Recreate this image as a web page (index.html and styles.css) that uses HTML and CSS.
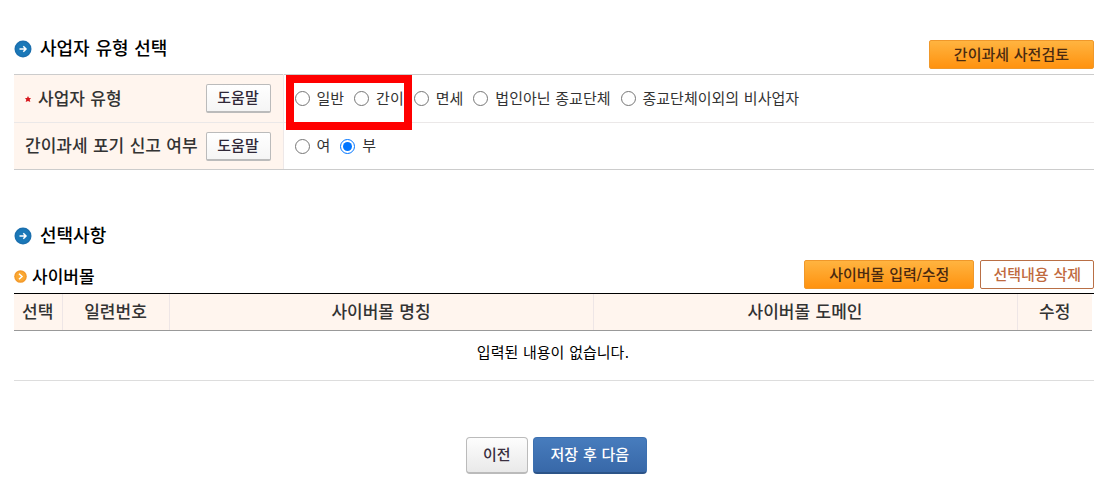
FILE: index.html
```html
<!DOCTYPE html>
<html lang="ko">
<head>
  <meta charset="UTF-8" />
  <meta name="viewport" content="width=device-width, initial-scale=1.0"/>
  <title>사업자 유형 선택</title>
  <link rel="stylesheet" href="styles.css">
</head>
<body>
  <!-- Business type -->
  <section class="section">
    <div class="section-head">
      <h2 class="title">
        <svg class="title-icon" viewBox="0 0 18 18" aria-hidden="true">
          <circle cx="9" cy="9" r="8.5" fill="#1b6fae"/>
          <circle cx="9" cy="9" r="7" fill="#1a78b8"/>
          <path d="M5.5 9h6.5M9.3 6.3L12 9l-2.7 2.7" fill="none" stroke="#fff" stroke-width="1.5"/>
        </svg>
        사업자 유형 선택
      </h2>
      <button type="button" class="btn btn-orange">간이과세 사전검토</button>
    </div>

    <table class="form-table">
      <tr>
        <th scope="row">
          <div class="label">
            <span class="label-text"><svg class="required" viewBox="0 0 6 6" aria-hidden="true"><path d="M3 0l1 2 2 0-1.3 1.7.6 2.3L3 5 .7 6l.6-2.3L0 2h2z" fill="#d8191f"/></svg>사업자 유형</span>
            <button type="button" class="btn btn-help">도움말</button>
          </div>
        </th>
        <td>
          <div class="options">
            <label class="option"><input type="radio" name="bizType">일반</label>
            <label class="option"><input type="radio" name="bizType">간이</label>
            <label class="option"><input type="radio" name="bizType">면세</label>
            <label class="option"><input type="radio" name="bizType">법인아닌 종교단체</label>
            <label class="option"><input type="radio" name="bizType">종교단체이외의 비사업자</label>
            <span class="highlight"></span>
          </div>
        </td>
      </tr>
      <tr>
        <th scope="row">
          <div class="label">
            <span class="label-text">간이과세 포기 신고 여부</span>
            <button type="button" class="btn btn-help">도움말</button>
          </div>
        </th>
        <td>
          <div class="options">
            <label class="option"><input type="radio" name="giveUp">여</label>
            <label class="option"><input type="radio" name="giveUp" checked>부</label>
          </div>
        </td>
      </tr>
    </table>
  </section>

  <!-- Optional items -->
  <section class="section">
    <h2 class="title">
      <svg class="title-icon" viewBox="0 0 18 18" aria-hidden="true">
        <circle cx="9" cy="9" r="8.5" fill="#1b6fae"/>
        <circle cx="9" cy="9" r="7" fill="#1a78b8"/>
        <path d="M5.5 9h6.5M9.3 6.3L12 9l-2.7 2.7" fill="none" stroke="#fff" stroke-width="1.5"/>
      </svg>
      선택사항
    </h2>

    <div class="section-head sub-head">
      <h3 class="subtitle">
        <svg class="subtitle-icon" viewBox="0 0 13 13" aria-hidden="true">
          <circle cx="6.5" cy="6.5" r="6.3" fill="#f39a2c"/>
          <circle cx="6.5" cy="6.5" r="4.8" fill="#fba832"/>
          <path d="M5 3.8l3 2.7-3 2.7" fill="none" stroke="#fff" stroke-width="1.5"/>
        </svg>
        사이버몰
      </h3>
      <div class="actions">
        <button type="button" class="btn btn-orange">사이버몰 입력/수정</button>
        <button type="button" class="btn btn-line">선택내용 삭제</button>
      </div>
    </div>

    <div class="list">
      <table class="list-table">
        <colgroup>
          <col class="col-select">
          <col class="col-no">
          <col>
          <col>
          <col class="col-edit">
        </colgroup>
        <thead>
          <tr>
            <th>선택</th>
            <th>일련번호</th>
            <th>사이버몰 명칭</th>
            <th>사이버몰 도메인</th>
            <th>수정</th>
          </tr>
        </thead>
        <tbody>
          <tr>
            <td colspan="5">입력된 내용이 없습니다.</td>
          </tr>
        </tbody>
      </table>
    </div>
  </section>

  <div class="footer">
    <button type="button" class="btn btn-big">이전</button>
    <button type="button" class="btn btn-big btn-blue">저장 후 다음</button>
  </div>
</body>
</html>
```

FILE: styles.css
```css
* {
  box-sizing: border-box;
}

body {
  margin: 0;
  padding: 30px 17px 0 14px;
  font-family: "DejaVu Sans", "Noto Sans CJK KR", sans-serif;
  font-size: 15px;
  line-height: 20px;
  color: #333;
  background: #fff;
}

.section {
  margin-bottom: 47px;
}

.section-head {
  display: flex;
  justify-content: space-between;
  align-items: flex-end;
  padding-bottom: 5px;
}

.title,
.subtitle {
  display: flex;
  align-items: center;
  margin: 0;
  font-weight: 500;
  color: #000;
}

.title {
  gap: 8px;
  height: 37px;
  font-size: 18px;
}

.section-head .title {
  margin-bottom: 2px;
}

.subtitle {
  gap: 5px;
  height: 25px;
  font-size: 17px;
}

.title-icon {
  width: 18px;
  height: 18px;
}

.subtitle-icon {
  width: 13px;
  height: 13px;
}

/* Buttons */
.btn {
  height: 29px;
  padding: 0;
  border: 1px solid #bbb;
  border-radius: 2px;
  font-family: inherit;
  font-size: 15px;
  font-weight: 500;
  line-height: 20px;
  white-space: nowrap;
  cursor: pointer;
}

.btn-orange {
  padding: 0 24px;
  border-color: #f0982a;
  color: #4a2a10;
  background: linear-gradient(#ffb440, #ff920f);
}

.btn-line {
  padding: 0 12px;
  border-color: #b96f45;
  color: #c06a40;
  background: #fff;
}

.btn-help {
  flex: none;
  width: 65px;
  border-bottom-width: 2px;
  color: #302838;
  background: linear-gradient(#fff, #f5f5f5);
}

.btn-big {
  height: 37px;
  padding: 0 16px;
  border-bottom-width: 2px;
  border-radius: 4px;
  color: #3a2f3f;
  background: linear-gradient(#fdfdfd, #e9e9e9);
}

.btn-blue {
  padding: 0 17px;
  border-color: #3c70b0;
  border-bottom-color: #2c5488;
  color: #fff;
  background: linear-gradient(#477cbd, #3868a8);
}

/* Form table */
.form-table {
  width: 100%;
  border-collapse: collapse;
  border-top: 1px solid #ccc;
  border-bottom: 1px solid #ccc;
}

.form-table th,
.form-table td {
  height: 48px;
  padding: 0 11px;
  border-bottom: 1px solid #ebe8e8;
}

.form-table th {
  width: 269px;
  padding-right: 12px;
  border-right: 1px solid #eee8e8;
  font-size: 17px;
  font-weight: 500;
  background: #fff5ee;
}

.form-table tr:last-child th,
.form-table tr:last-child td {
  height: 47px;
  border-bottom-color: #ccc;
}

.label {
  display: flex;
  justify-content: space-between;
  align-items: center;
}

.label-text {
  display: flex;
  align-items: center;
  white-space: nowrap;
}

.required {
  width: 6px;
  height: 6px;
  margin-right: 7px;
}

.options {
  position: relative;
  display: flex;
  gap: 10px;
}

.option {
  display: flex;
  align-items: center;
  gap: 7px;
  white-space: nowrap;
}

.option input {
  width: 15px;
  height: 15px;
  margin: 0;
}

/* Red frame over the first two options */
.highlight {
  position: absolute;
  top: -14px;
  left: -9px;
  width: 126px;
  height: 55px;
  border: 8px solid #f00;
  pointer-events: none;
}

/* Cyber mall list */
.sub-head {
  padding-top: 6px;
  padding-bottom: 4px;
}

.list {
  border-top: 1px solid #000;
  border-bottom: 1px solid #ddd;
}

.list-table {
  width: calc(100% - 2px);
  border-collapse: collapse;
  table-layout: fixed;
}

.list-table th {
  height: 36px;
  padding: 0;
  border-right: 1px solid #eee6e6;
  border-bottom: 1px solid #999;
  font-size: 17px;
  font-weight: 500;
  background: #fff5ee;
}

.list-table th:last-child {
  border-right: 0;
}

.list-table td {
  height: 50px;
  padding: 0 0 4px;
  text-align: center;
  color: #000;
}

.col-select {
  width: 48px;
}

.col-no {
  width: 107px;
}

.col-edit {
  width: 75px;
}

.actions {
  display: flex;
  gap: 6px;
}

.footer {
  display: flex;
  justify-content: center;
  gap: 5px;
  padding: 9px 0 0 5px;
}
```
